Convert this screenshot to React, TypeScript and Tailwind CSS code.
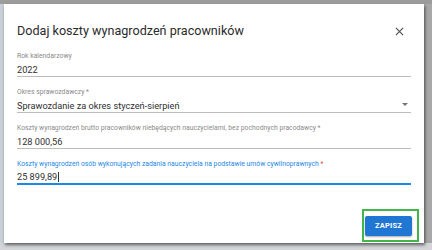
import React from "react";

function Field({
  label,
  value,
  required,
  active,
  select,
}: {
  label: string;
  value: string;
  required?: boolean;
  active?: boolean;
  select?: boolean;
}) {
  return (
    <div className="flex flex-col">
      <div
        className={
          "text-[6.8px] leading-[9px] whitespace-nowrap " +
          (active ? "text-[#1e88e5]" : "text-[#8a8a8a]")
        }
      >
        {label}
        {required && (
          <span className={active ? "text-[#f44336]" : ""}> *</span>
        )}
      </div>
      <div
        className={
          "flex items-center justify-between mt-[1px] h-[15px] " +
          (active ? "border-b-2 border-[#1e88e5]" : "border-b border-[#bdbdbd]")
        }
      >
        <div className="flex items-center text-[9.2px] leading-[13px] text-[#303030]">
          {value}
          {active && <span className="ml-[0.5px] w-[1px] h-[10px] bg-[#333]" />}
        </div>
        {select && (
          <svg width="6" height="4" viewBox="0 0 6 4" className="mr-[3px]">
            <path d="M0 0 L6 0 L3 3 Z" fill="#757575" />
          </svg>
        )}
      </div>
    </div>
  );
}

export default function App() {
  return (
    <div
      className="w-[432px] h-[250px] flex flex-col bg-[#d3d5d8] overflow-hidden"
      style={{ fontFamily: "Roboto, 'Noto Sans', sans-serif" }}
    >
      <div className="h-[4px] bg-[#9c9c9c] shrink-0" />
      <div className="flex">
        <div className="w-[4px] bg-[#c9d0d8]" />
        <div className="relative w-[420px] h-[239px] bg-white shadow-[1px_2px_3px_rgba(0,0,0,0.55)] flex flex-col px-[13px]">
          <div className="flex items-center justify-between h-[46px] pt-[8px]">
            <div className="text-[12.6px] text-[#2b2b2b]">
              Dodaj koszty wynagrodzeń pracowników
            </div>
            <svg width="9" height="9" viewBox="0 0 10 10" className="mr-[7px]">
              <path d="M1 1 L9 9 M9 1 L1 9" stroke="#555" strokeWidth="1.4" />
            </svg>
          </div>
          <div className="flex flex-col gap-[11px] mt-[2px]">
            <Field label="Rok kalendarzowy" value="2022" />
            <Field
              label="Okres sprawozdawczy"
              required
              value="Sprawozdanie za okres styczeń-sierpień"
              select
            />
            <Field
              label="Koszty wynagrodzeń brutto pracowników niebędących nauczycielami, bez pochodnych pracodawcy"
              required
              value="128 000,56"
            />
            <Field
              label="Koszty wynagrodzeń osób wykonujących zadania nauczyciela na podstawie umów cywilnoprawnych"
              required
              value="25 899,89"
              active
            />
          </div>
          <div className="flex justify-end mt-auto mb-[1px] mr-[-8px]">
            <div className="flex border-2 border-[#43b649] pl-[1px] pr-[5px] pt-[5px] pb-[4px]">
              <button className="h-[20px] w-[47px] rounded-[2px] bg-[#1f76d3] text-white text-[7.5px] font-bold tracking-[0.2px] shadow-[0_1px_2px_rgba(0,0,0,0.35)]">
                ZAPISZ
              </button>
            </div>
          </div>
        </div>
        <div className="w-[8px] bg-[#a8a8a8]" />
      </div>
    </div>
  );
}
